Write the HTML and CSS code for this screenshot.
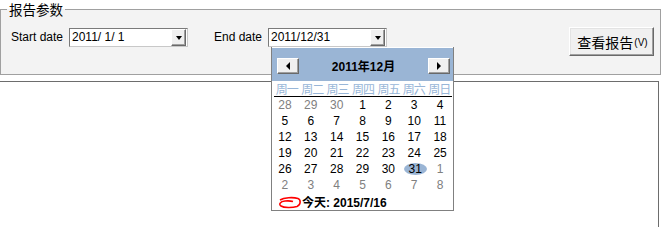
FILE: index.html
```html
<!DOCTYPE html>
<html>
<head>
<meta charset="utf-8">
<link rel="stylesheet" href="styles.css">
</head>
<body>
<div class="group">
  <div class="legend">报告参数</div>
  <div class="row">
    <div class="label lbl-start">Start date</div>
    <div class="combo combo-start">
      <span class="combo-text">2011/ 1/ 1</span>
      <span class="drop"><span class="tri"></span></span>
    </div>
    <div class="label lbl-end">End date</div>
    <div class="combo">
      <span class="combo-text">2011/12/31</span>
      <span class="drop"><span class="tri"></span></span>
    </div>
    <div class="btn"><span class="btn-main">查看报告</span><span class="btn-key">(V)</span></div>
  </div>
</div>
<div class="panel"></div>

<div class="cal">
  <div class="cal-head">
    <span class="nav"><span class="tri-l"></span></span>
    <span class="title">2011年12月</span>
    <span class="nav"><span class="tri-r"></span></span>
  </div>
  <div class="weekdays">
    <span>周一</span><span>周二</span><span>周三</span><span>周四</span><span>周五</span><span>周六</span><span>周日</span>
  </div>
  <div class="days">
    <span class="o">28</span><span class="o">29</span><span class="o">30</span><span>1</span><span>2</span><span>3</span><span>4</span>
    <span>5</span><span>6</span><span>7</span><span>8</span><span>9</span><span>10</span><span>11</span>
    <span>12</span><span>13</span><span>14</span><span>15</span><span>16</span><span>17</span><span>18</span>
    <span>19</span><span>20</span><span>21</span><span>22</span><span>23</span><span>24</span><span>25</span>
    <span>26</span><span>27</span><span>28</span><span>29</span><span>30</span><span class="sel"><i>31</i></span><span class="o">1</span>
    <span class="o">2</span><span class="o">3</span><span class="o">4</span><span class="o">5</span><span class="o">6</span><span class="o">7</span><span class="o">8</span>
  </div>
  <div class="today">
    <svg class="circle" width="24" height="13" viewBox="0 0 24 13">
      <path d="M2 4 C6 1.5 15 1 20 2.5 C23 3.5 23 9 19 10.5 C14 12 6 12 3 10 C0.5 8.5 2 5.5 7 5 C11 4.6 14 5.2 15 5.5" fill="none" stroke="#ff0000" stroke-width="1.6"/>
    </svg>
    <span class="today-text">今天: 2015/7/16</span>
  </div>
</div>
</body>
</html>
```

FILE: styles.css
```css
html, body {
  margin: 0;
  padding: 0;
  background: #ffffff;
}
body {
  width: 661px;
  height: 228px;
  overflow: hidden;
  position: relative;
  font-family: "Liberation Sans", "Noto Sans CJK SC", sans-serif;
  font-size: 12px;
  color: #000;
}
.group {
  position: relative;
  margin-top: 9px;
  width: 659px;
  height: 64px;
  border: 1px solid #a0a0a0;
  background: #f3f3f3;
}
.legend {
  position: absolute;
  left: 6px;
  top: -10px;
  padding: 0 2px;
  height: 18px;
  line-height: 18px;
  font-family: "Noto Sans CJK SC", sans-serif;
  font-size: 13.5px;
  background: linear-gradient(#ffffff 0, #ffffff 9px, #f3f3f3 9px);
  color: #000;
}
.row {
  display: flex;
  align-items: flex-start;
  padding: 17px 6px 0 10px;
}
.label {
  margin-top: 1px;
  height: 19px;
  line-height: 19px;
  font-size: 12px;
}
.lbl-start { width: 58px; }
.lbl-end { width: 54px; }
.combo {
  margin-top: 1px;
  box-sizing: border-box;
  width: 119px;
  height: 19px;
  border: 1px solid #7a7a7a;
  border-right-color: #c8c8c8;
  border-bottom-color: #c8c8c8;
  background: #fff;
  display: flex;
  align-items: center;
}
.combo-start { margin-right: 26px; }
.combo-text {
  flex: 1;
  padding-left: 2px;
  font-size: 12px;
  line-height: 17px;
}
.drop {
  box-sizing: border-box;
  width: 15px;
  height: 17px;
  margin-right: 1px;
  background: #f0f0f0;
  border: 1px solid #fff;
  border-right-color: #696969;
  border-bottom-color: #696969;
  box-shadow: inset -1px -1px 0 #a0a0a0;
  display: flex;
  align-items: center;
  justify-content: center;
}
.tri {
  width: 0;
  height: 0;
  border-left: 3.5px solid transparent;
  border-right: 3.5px solid transparent;
  border-top: 4px solid #000;
  margin-top: 1px;
}
.btn {
  margin-left: auto;
  box-sizing: border-box;
  width: 85px;
  height: 29px;
  background: #f0f0f0;
  border: 1px solid #fff;
  border-right-color: #696969;
  border-bottom-color: #696969;
  box-shadow: inset -1px -1px 0 #a0a0a0, inset 1px 1px 0 #e3e3e3;
  display: flex;
  align-items: center;
  justify-content: center;
  padding-left: 2px;
}
.btn-main {
  font-family: "Noto Sans CJK SC", sans-serif;
  font-size: 14px;
}
.btn-key {
  font-size: 10px;
  margin-left: 1px;
  margin-top: 2px;
}
.panel {
  margin-top: 6px;
  width: 658px;
  height: 145px;
  border-top: 1px solid #6d6d6d;
  border-right: 1px solid #6d6d6d;
  background: #fff;
}
.cal {
  position: absolute;
  left: 271px;
  top: 47px;
  width: 181px;
  border: 1px solid #808080;
  border-top: none;
  background: #fff;
  padding-top: 1px;
}
.cal-head {
  height: 33px;
  background: #9ab5d5;
  display: flex;
  align-items: center;
  padding: 0 3px 0 5px;
}
.nav {
  box-sizing: border-box;
  width: 22px;
  height: 16px;
  margin-top: 2px;
  background: #f0f0f0;
  border: 1px solid #fff;
  border-right-color: #696969;
  border-bottom-color: #696969;
  box-shadow: inset -1px -1px 0 #a0a0a0;
  display: flex;
  align-items: center;
  justify-content: center;
}
.tri-l {
  width: 0; height: 0;
  border-top: 4px solid transparent;
  border-bottom: 4px solid transparent;
  border-right: 4px solid #000;
}
.tri-r {
  width: 0; height: 0;
  border-top: 4px solid transparent;
  border-bottom: 4px solid transparent;
  border-left: 4px solid #000;
}
.title {
  flex: 1;
  text-align: center;
  font-weight: bold;
  font-size: 12px;
  margin-top: 1px;
}
.weekdays {
  display: grid;
  grid-template-columns: repeat(7, 1fr);
  height: 15px;
  line-height: 15px;
  margin: 0 1px 0 2px;
  border-bottom: 1px solid #000;
  color: #98b6d8;
  font-family: "Noto Sans CJK SC", sans-serif;
  font-size: 12px;
  text-align: center;
  letter-spacing: -1px;
}
.days {
  display: grid;
  grid-template-columns: repeat(7, 1fr);
  grid-auto-rows: 16px;
  text-align: center;
  font-size: 12px;
  line-height: 16px;
}
.days span {
  display: flex;
  align-items: center;
  justify-content: center;
}
.days .o { color: #808080; }
.days .sel i {
  font-style: normal;
  display: block;
  width: 23px;
  height: 12px;
  line-height: 12px;
  border-radius: 50%;
  background: #9ab5d5;
  margin-left: 2px;
}
.today {
  height: 17px;
  display: flex;
  align-items: center;
  padding-left: 6px;
}
.circle { display: block; margin-top: 1px; }
.today-text {
  font-weight: bold;
  font-size: 12px;
}
```
